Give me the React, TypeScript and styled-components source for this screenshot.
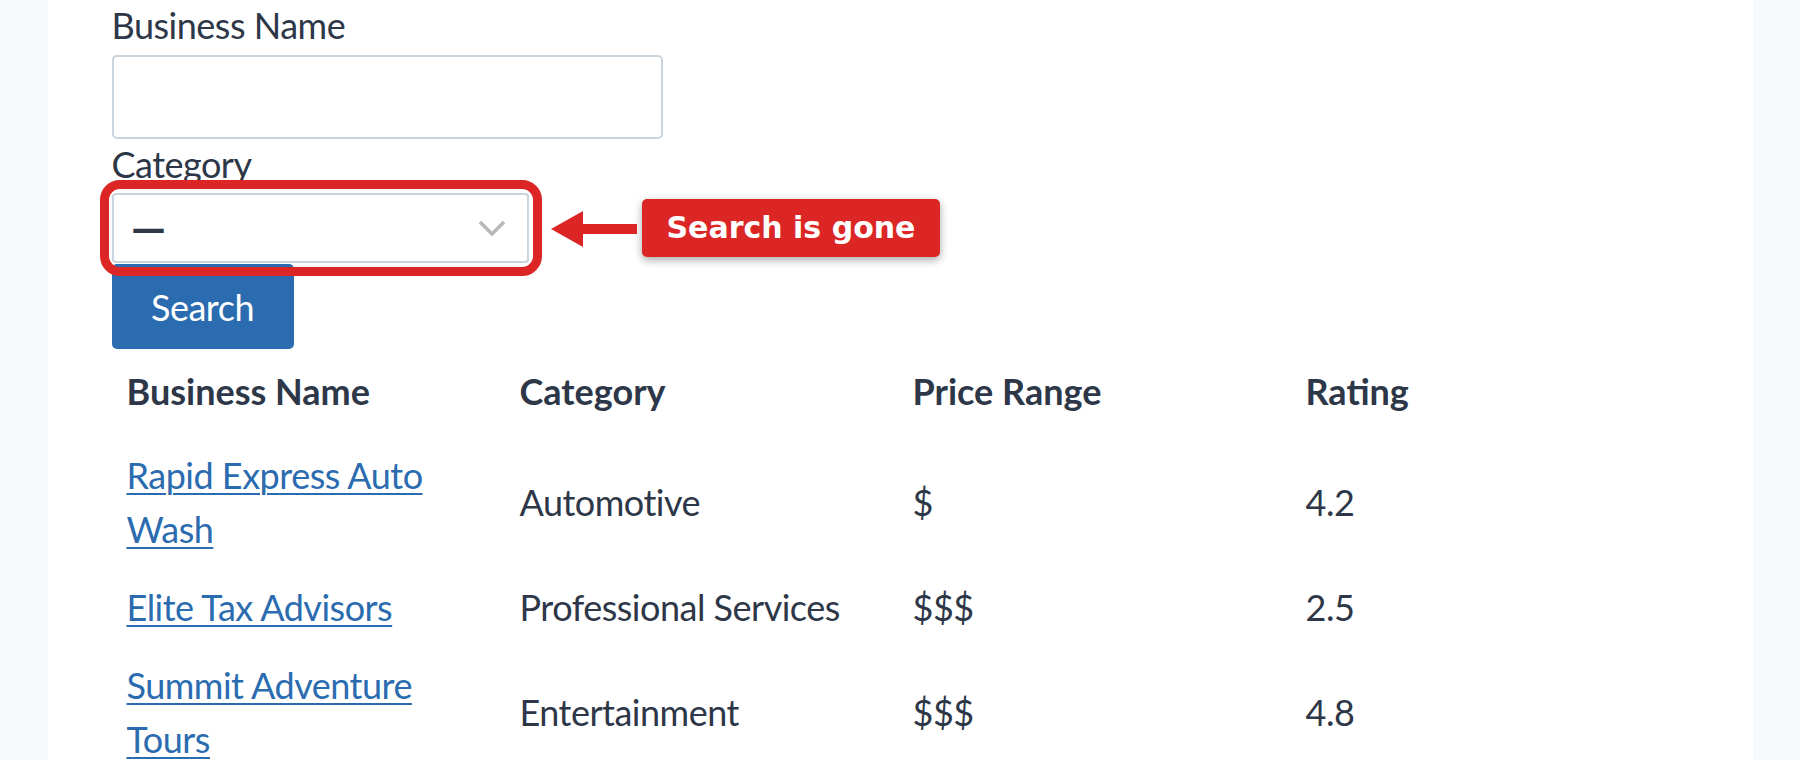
import React from "react";
import styled, { createGlobalStyle } from "styled-components";

const GlobalStyle = createGlobalStyle`
  html, body {
    margin: 0;
    padding: 0;
    overflow: hidden;
    background: #f7fafc;
  }
  body {
    font-family: Lato, "Open Sans", sans-serif;
    color: #2d3748;
  }
`;

const Panel = styled.main`
  width: 1705px;
  min-height: 100vh;
  margin: 0 auto;
  background: #ffffff;
  padding: 0 70px 0 63px;
  box-sizing: border-box;
  font-size: 36px;
  line-height: 54px;
  letter-spacing: -0.5px;
`;

const Form = styled.form`
  display: flex;
  flex-direction: column;
  align-items: flex-start;
  padding-left: 1px;
`;

const Label = styled.label`
  display: block;
  margin-top: -2px;
  color: #2d3748;
`;

const TextInput = styled.input`
  width: 551px;
  height: 84px;
  margin-top: 3px;
  box-sizing: border-box;
  border: 2px solid #cbd5e0;
  border-radius: 5px;
  background: #fff;
  font: inherit;
  padding: 0 18px;
  outline: none;
`;

const FieldWrap = styled.div`
  position: relative;
  margin-top: 2px;
`;

const SelectBox = styled.div`
  width: 417px;
  height: 70px;
  box-sizing: border-box;
  border: 2px solid #cbd5e0;
  border-radius: 4px;
  background: #fff;
  display: flex;
  align-items: center;
  justify-content: space-between;
  padding: 0 21px 0 18px;
  color: #2d3748;
`;

const Dash = styled.span`
  font-family: "DejaVu Sans", sans-serif;
  font-size: 34px;
  letter-spacing: 0;
  font-weight: 700;
`;

const Highlight = styled.div`
  position: absolute;
  left: -12px;
  top: -13px;
  width: 442px;
  height: 96px;
  box-sizing: border-box;
  border: 9px solid #dc2626;
  border-radius: 20px;
  pointer-events: none;
  z-index: 3;
`;

const Arrow = styled.svg`
  position: absolute;
  left: 439px;
  top: 17px;
  z-index: 3;
`;

const Callout = styled.div`
  position: absolute;
  left: 530px;
  top: 6px;
  height: 58px;
  padding: 0 25px;
  display: flex;
  align-items: center;
  background: #dc2626;
  color: #fff;
  border-radius: 5px;
  box-shadow: 0 3px 9px rgba(0, 0, 0, 0.35);
  font-family: "DejaVu Sans", sans-serif;
  font-weight: 700;
  font-size: 30px;
  letter-spacing: 0;
  line-height: 1;
  white-space: nowrap;
  z-index: 3;
`;

const Button = styled.button`
  width: 182px;
  height: 85px;
  margin-top: 1px;
  border: none;
  border-radius: 5px;
  background: #2b6cb0;
  color: #fff;
  font: inherit;
  font-size: 36px;
  letter-spacing: -0.5px;
  padding: 0;
  position: relative;
  z-index: 1;
`;

const Table = styled.table`
  width: 100%;
  table-layout: fixed;
  border-collapse: collapse;
`;

const Th = styled.th`
  text-align: left;
  font-weight: 700;
  letter-spacing: 0;
  padding: 15px 16px 18px;
  color: #2d3748;
`;

const Td = styled.td`
  padding: 12px 16px;
  vertical-align: middle;
  color: #2d3748;
`;

const Link = styled.a`
  color: #2b6cb0;
  text-decoration: underline;
  text-decoration-thickness: 2px;
  text-underline-offset: 4px;
`;

const rows = [
  { name: "Rapid Express Auto Wash", cat: "Automotive", price: "$", rating: "4.2" },
  { name: "Elite Tax Advisors", cat: "Professional Services", price: "$$$", rating: "2.5" },
  { name: "Summit Adventure Tours", cat: "Entertainment", price: "$$$", rating: "4.8" },
];

export default function App() {
  return (
    <>
      <GlobalStyle />
      <Panel>
        <Form onSubmit={(e) => e.preventDefault()}>
          <Label>Business Name</Label>
          <TextInput type="text" />
          <Label>Category</Label>
          <FieldWrap>
            <SelectBox>
              <Dash>—</Dash>
              <svg width="28" height="17" viewBox="0 0 28 17">
                <path d="M2 2 L14 14 L26 2" fill="none" stroke="#b8b8b8" strokeWidth="3.5" />
              </svg>
            </SelectBox>
            <Highlight />
            <Arrow width="86" height="38" viewBox="0 0 86 38">
              <polygon points="0,19 32,1 32,37" fill="#dc2626" />
              <rect x="30" y="14" width="56" height="10" fill="#dc2626" />
            </Arrow>
            <Callout>Search is gone</Callout>
          </FieldWrap>
          <Button type="submit">Search</Button>
        </Form>
        <Table>
          <thead>
            <tr>
              <Th>Business Name</Th>
              <Th>Category</Th>
              <Th>Price Range</Th>
              <Th>Rating</Th>
            </tr>
          </thead>
          <tbody>
            {rows.map((r) => (
              <tr key={r.name}>
                <Td>
                  <Link href="#">{r.name}</Link>
                </Td>
                <Td>{r.cat}</Td>
                <Td>{r.price}</Td>
                <Td>{r.rating}</Td>
              </tr>
            ))}
          </tbody>
        </Table>
      </Panel>
    </>
  );
}
